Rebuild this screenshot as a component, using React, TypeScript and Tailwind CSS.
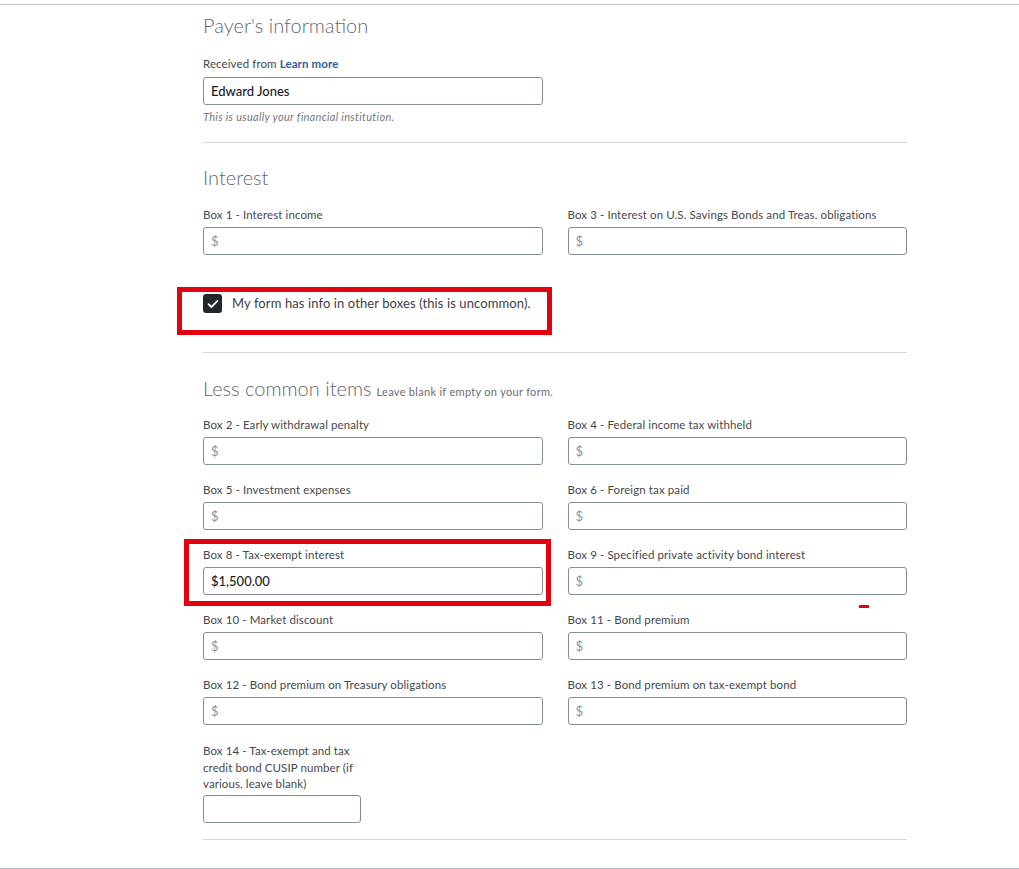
import type { ReactNode } from "react";

const FONT = "font-['Lato','Open_Sans','Noto_Sans',sans-serif]";

function Label({ children }: { children: ReactNode }) {
  return (
    <div className="text-[11.5px] leading-[14px] tracking-[0.1px] text-[#45474d]">{children}</div>
  );
}

function MoneyInput({ value }: { value?: string }) {
  return (
    <input
      readOnly
      value={value ?? ""}
      placeholder="$"
      className="mt-[5px] block h-[28px] w-full rounded-[3px] border border-[#848e95] bg-white px-[7px] text-[13px] font-medium text-[#1b1c1f] outline-none placeholder:font-normal placeholder:text-[#7f98a3]"
    />
  );
}

function Field({
  label,
  value,
  children,
}: {
  label: string;
  value?: string;
  children?: ReactNode;
}) {
  return (
    <div className="relative">
      <Label>{label}</Label>
      <MoneyInput value={value} />
      {children}
    </div>
  );
}

function Heading({ title, note }: { title: string; note?: string }) {
  return (
    <h2 className="text-[20px] leading-[24px] font-light text-[#66676d]">
      {title}
      {note ? (
        <span className="ml-[5px] text-[11px] font-normal tracking-[0.3px] text-[#6b6c72]">
          {note}
        </span>
      ) : null}
    </h2>
  );
}

function Divider() {
  return <div className="border-t border-[#d6d7d9]" />;
}

export default function App() {
  return (
    <div className={`min-h-[869px] bg-white ${FONT}`}>
      <div className="h-[4px]" />
      <div className="border-t border-[#c2ccd3]" />

      <div className="ml-[203px] w-[704px]">
        {/* Payer */}
        <div className="pt-[8px]">
          <Heading title="Payer's information" />
          <div className="mt-[20px] text-[11.5px] leading-[14px] tracking-[0.1px] text-[#45474d]">
            Received from{" "}
            <a className="font-bold text-[#2f5d9c]" href="#">
              Learn more
            </a>
          </div>
          <input
            readOnly
            value="Edward Jones"
            className="mt-[6px] block h-[28px] w-[340px] rounded-[3px] border border-[#848e95] px-[7px] text-[13px] font-medium text-[#1b1c1f] outline-none"
          />
          <p className="mt-[5px] text-[11px] leading-[14px] tracking-[0.3px] italic text-[#76777c]">
            This is usually your financial institution.
          </p>
        </div>
        <div className="mt-[18px]">
          <Divider />
        </div>

        {/* Interest */}
        <div className="pt-[22px]">
          <Heading title="Interest" />
          <div className="mt-[19px] grid grid-cols-2 gap-x-[25px]">
            <Field label="Box 1 - Interest income" />
            <Field label="Box 3 - Interest on U.S. Savings Bonds and Treas. obligations" />
          </div>
          <div className="relative mt-[39px] flex h-[19px] items-center gap-[10px]">
            <span className="flex h-[19px] w-[19px] items-center justify-center rounded-[3px] bg-[#22272b]">
              <svg width="12" height="10" viewBox="0 0 12 10" fill="none">
                <path
                  d="M1.5 5.2 4.4 8 10.5 1.8"
                  stroke="#fff"
                  strokeWidth="1.8"
                  strokeLinecap="round"
                  strokeLinejoin="round"
                />
              </svg>
            </span>
            <span className="text-[13px] tracking-[0.1px] text-[#3c3e44]">
              My form has info in other boxes (this is uncommon).
            </span>
            <div className="pointer-events-none absolute left-[-26px] top-[-7px] h-[48px] w-[375px] border-[5px] border-[#e3000f]" />
          </div>
        </div>
        <div className="mt-[39px]">
          <Divider />
        </div>

        {/* Less common */}
        <div className="pt-[23px]">
          <Heading title="Less common items" note="Leave blank if empty on your form." />
          <div className="mt-[14px] grid grid-cols-2 gap-x-[25px] gap-y-[18px]">
            <Field label="Box 2 - Early withdrawal penalty" />
            <Field label="Box 4 - Federal income tax withheld" />
            <Field label="Box 5 - Investment expenses" />
            <Field label="Box 6 - Foreign tax paid" />
            <Field label="Box 8 - Tax-exempt interest" value="$1,500.00">
              <div className="pointer-events-none absolute left-[-19px] top-[-9px] h-[67px] w-[367px] border-[5px] border-[#e3000f]" />
            </Field>
            <Field label="Box 9 - Specified private activity bond interest">
              <div className="pointer-events-none absolute left-[291px] top-[57px] h-[3px] w-[10px] bg-[#e3000f]" />
            </Field>
            <Field label="Box 10 - Market discount" />
            <Field label="Box 11 - Bond premium" />
            <Field label="Box 12 - Bond premium on Treasury obligations" />
            <Field label="Box 13 - Bond premium on tax-exempt bond" />
            <div>
              <div className="w-[158px] text-[11.5px] leading-[16.5px] tracking-[0.1px] text-[#45474d]">
                Box 14 - Tax-exempt and tax credit bond CUSIP number (if various, leave blank)
              </div>
              <input
                readOnly
                className="mt-[2px] block h-[28px] w-[158px] rounded-[3px] border border-[#848e95] outline-none"
              />
            </div>
          </div>
        </div>
        <div className="mt-[16px]">
          <Divider />
        </div>
      </div>

      <div className="mt-[28px] border-t border-[#b4bcc8]" />
    </div>
  );
}
